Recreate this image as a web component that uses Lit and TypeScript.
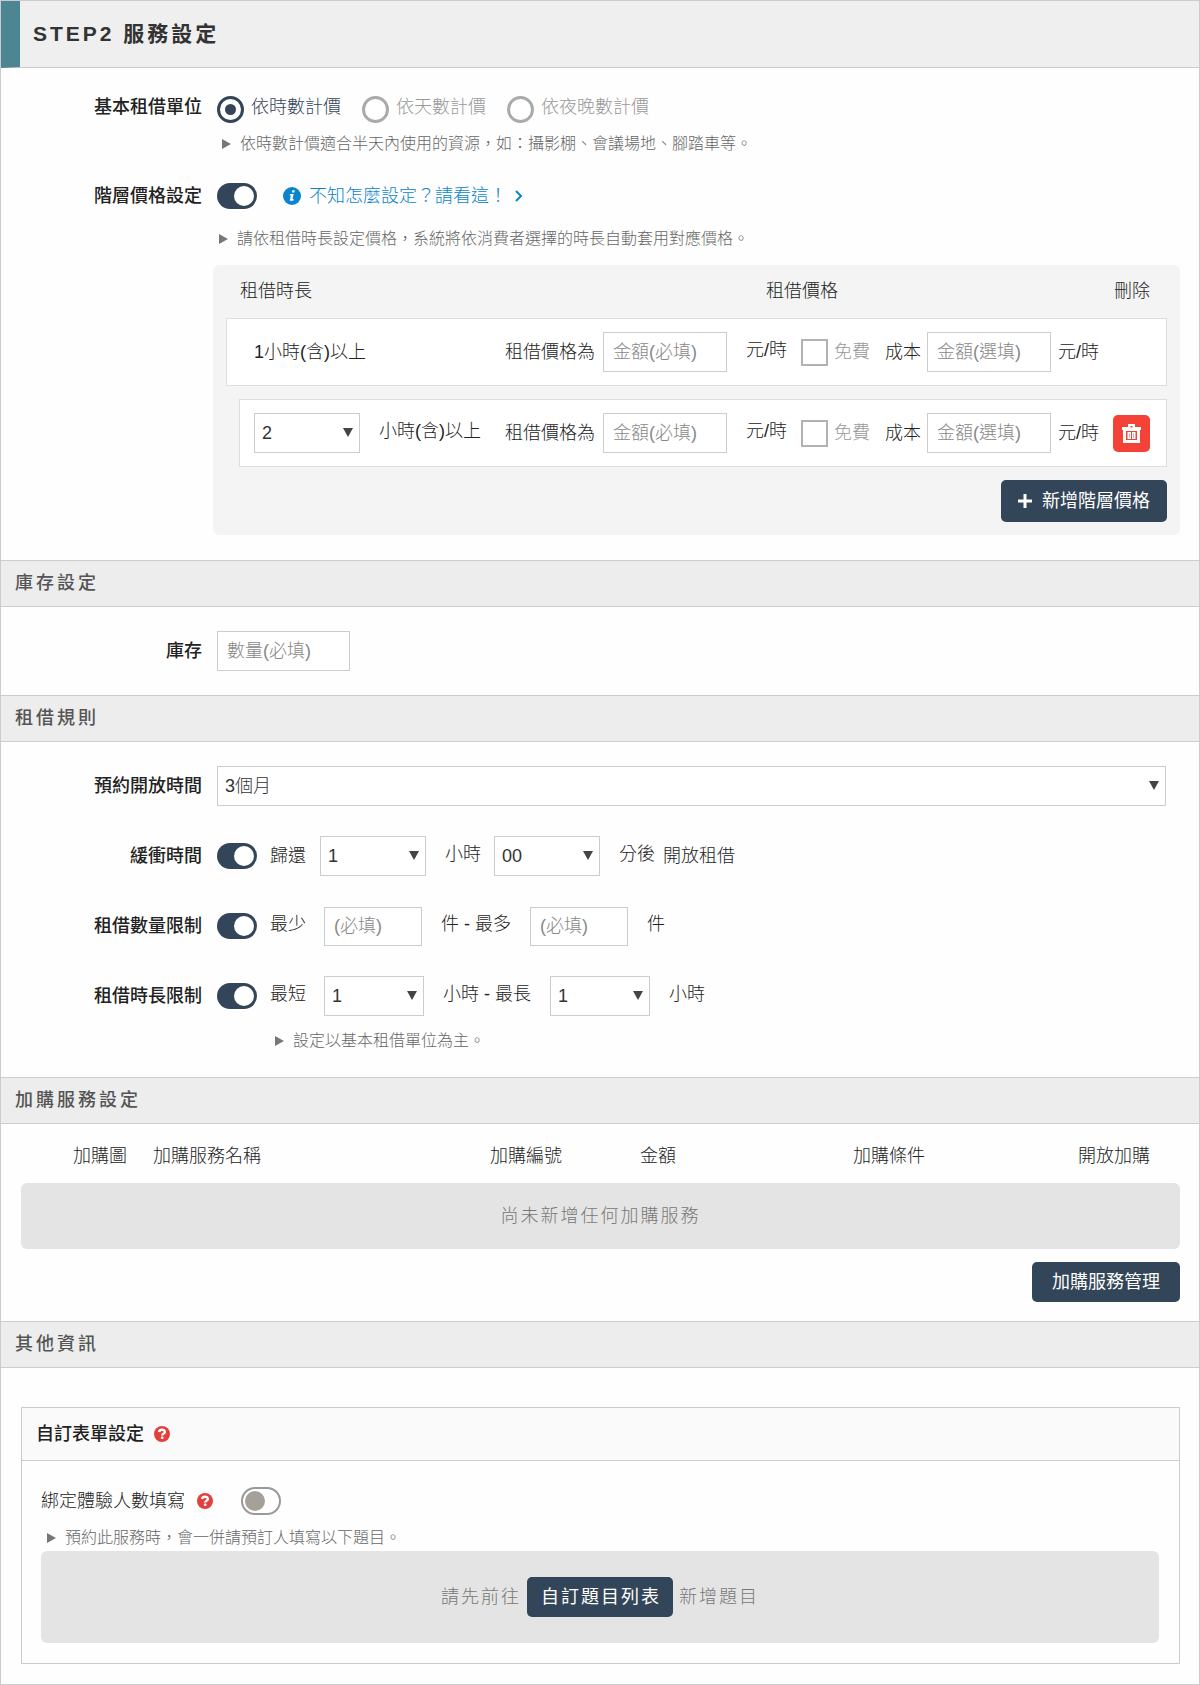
import { LitElement, html, css, svg, nothing } from "lit";
import { customElement, property } from "lit/decorators.js";

const shared = css`
  *, *::before, *::after { box-sizing: border-box; }
  input, select, button {
    font: inherit;
    color: inherit;
    margin: 0;
    border-radius: 0;
  }
  .text-box {
    height: 40px;
    width: 124px;
    padding: 0 9px;
    border: 1px solid #ccc;
    background: #fff;
    color: #444;
  }
  .text-box::placeholder { color: #888; opacity: 1; }
  .btn {
    display: inline-flex;
    align-items: center;
    justify-content: center;
    height: 40px;
    border: 0;
    border-radius: 5px;
    background: #334558;
    color: #fff;
    font-weight: 400;
    text-decoration: none;
    cursor: pointer;
  }
  .unit { padding-bottom: 4px; white-space: nowrap; }
`;

/* Drop-down with a solid triangle marker */
@customElement("ui-select")
export class UiSelect extends LitElement {
  @property({ type: Array }) options: string[] = [];
  @property() label = "";

  static styles = [shared, css`
    :host { display: block; position: relative; }
    select {
      display: block;
      width: 100%;
      height: 40px;
      padding: 0 24px 0 7px;
      border: 1px solid #ccc;
      background: #fff;
      color: #333;
      appearance: none;
    }
    .arrow {
      position: absolute;
      right: 7px;
      top: 15px;
      border: 5px solid transparent;
      border-top: 9px solid #444;
      border-bottom: 0;
      pointer-events: none;
    }
  `];

  render() {
    return html`
      <select aria-label=${this.label}>
        ${this.options.map((o) => html`<option>${o}</option>`)}
      </select>
      <span class="arrow"></span>`;
  }
}

/* On/off switch */
@customElement("ui-switch")
export class UiSwitch extends LitElement {
  @property({ type: Boolean }) checked = false;
  @property() label = "";

  static styles = [shared, css`
    :host { display: block; flex: none; }
    input {
      display: flex;
      align-items: center;
      width: 40px;
      height: 28px;
      padding: 0 2px;
      border: 2px solid #999;
      border-radius: 14px;
      background: #fff;
      appearance: none;
      cursor: pointer;
    }
    input::before {
      content: "";
      width: 20px;
      height: 20px;
      border-radius: 50%;
      background: #a5a19a;
    }
    input:checked {
      justify-content: flex-end;
      height: 26px;
      padding: 0 3px;
      border: 0;
      border-radius: 13px;
      background: #334558;
    }
    input:checked::before { background: #fff; }
  `];

  render() {
    return html`<input type="checkbox" role="switch" aria-label=${this.label} .checked=${this.checked}>`;
  }
}

/* One tier of the price list */
@customElement("price-tier")
export class PriceTier extends LitElement {
  @property({ type: Boolean }) removable = false;

  static styles = [shared, css`
    :host {
      display: grid;
      grid-template-columns: 1fr auto 37px;
      column-gap: 14px;
      align-items: center;
      height: 68px;
      padding: 0 16px 0 27px;
      border: 1px solid #ddd;
      background: #fff;
    }
    :host([removable]) { margin-left: 13px; padding-left: 14px; }
    .duration { display: flex; align-items: center; gap: 19px; }
    .duration ui-select { width: 106px; }
    .price { display: flex; align-items: center; white-space: nowrap; }
    .amount { margin: 0 19px 0 8px; }
    .free { display: flex; align-items: center; gap: 6px; margin: 0 15px 0 14px; color: #999; }
    .free input {
      width: 27px;
      height: 27px;
      border: 2px solid #b5b1ae;
      background: #fff;
      appearance: none;
    }
    .cost { margin: 0 7px 0 6px; }
    .remove { width: 37px; height: 37px; padding: 0; background: #f44336; }
  `];

  render() {
    return html`
      <div class="duration">
        ${this.removable
          ? html`<ui-select label="時數" .options=${["2", "3", "4"]}></ui-select><span class="unit">小時(含)以上</span>`
          : html`<span>1小時(含)以上</span>`}
      </div>
      <div class="price">
        <label for="amount">租借價格為</label>
        <input class="text-box amount" id="amount" placeholder="金額(必填)">
        <span class="unit">元/時</span>
        <label class="free"><input type="checkbox">免費</label>
        <label for="cost">成本</label>
        <input class="text-box cost" id="cost" placeholder="金額(選填)">
        <span>元/時</span>
      </div>
      ${this.removable
        ? html`<button class="btn remove" aria-label="刪除">
            <svg width="19" height="19" viewBox="0 0 19 19" fill="#fff" fill-rule="evenodd">
              <path d="M6 0h7v3h6v3h-1v13H1V6H0V3h6zM8.500 2v1.500h2V2zM4 7v9h11V7zM5.500 8h3.500v7H5.500zM10 8h3.500v7H10zM7 9.500v4h.5v-4zM11.500 9.500v4h.5v-4z"/>
            </svg>
          </button>`
        : nothing}`;
  }
}

const helpIcon = html`
  <svg class="help" width="16" height="16" viewBox="0 0 16 16" role="img" aria-label="說明">
    ${svg`<circle cx="8" cy="8" r="8" fill="#e3403c"/>
    <path d="M5 6C5.300 4.500 6.400 3.700 8 3.700s2.900.8 2.900 2.200c0 1.800-2.700 1.700-2.700 3.500" fill="none" stroke="#fff" stroke-width="2.400"/>
    <rect x="6.900" y="10.500" width="2.600" height="2.500" rx="1" fill="#fff"/>`}
  </svg>`;

@customElement("app-root")
export class AppRoot extends LitElement {
  static styles = [shared, css`
    :host {
      display: block;
      border: 1px solid #ccc;
      background: #fefefe;
      color: #222;
      font: 300 18px/24px "Liberation Sans", "Noto Sans CJK TC", sans-serif;
    }
    h1, h2, h3 { margin: 0; }
    .title {
      display: flex;
      align-items: center;
      height: 67px;
      padding-left: 13px;
      border-left: 19px solid #4d8693;
      border-bottom: 1px solid #ccc;
      background: #eeefee;
      color: #333;
      font-size: 21px;
      font-weight: 600;
      letter-spacing: 3px;
    }
    .section {
      height: 47px;
      padding: 0 14px;
      border: solid #ccc;
      border-width: 1px 0;
      background: #ededed;
      color: #555;
      font-size: 18px;
      line-height: 45px;
      font-weight: 500;
      letter-spacing: 3px;
    }
    .form { padding: 24px 0; }
    .basic { padding-top: 27px; }
    .row {
      display: grid;
      grid-template-columns: 201px 1fr;
      column-gap: 15px;
      align-items: center;
    }
    .row + .row { margin-top: 30px; }
    .name { text-align: right; color: #222; font-weight: 500; }
    .fields { display: flex; align-items: center; min-height: 40px; }
    .compact { min-height: 27px; }
    .wide { padding-right: 33px; }
    .wide ui-select { flex: 1; }

    .radio { display: flex; align-items: center; gap: 7px; height: 27px; margin-right: 21px; color: #999; }
    .radio input {
      display: grid;
      place-items: center;
      width: 27px;
      height: 27px;
      border: 3px solid #aaa;
      border-radius: 50%;
      background: #fff;
      appearance: none;
    }
    .radio input:checked { border-color: #334558; }
    .radio input:checked::before {
      content: "";
      width: 11px;
      height: 11px;
      border-radius: 50%;
      background: #334558;
    }
    .radio.on { color: #334558; }

    .hint {
      display: flex;
      align-items: center;
      gap: 9px;
      margin: 0;
      color: #666;
      font-size: 16px;
    }
    .hint::before {
      content: "";
      border: 5px solid transparent;
      border-left: 9px solid #777;
      border-right: 0;
    }
    .hint-unit { margin: 9px 0 26px 221px; }
    .hint-tier { margin: 18px 0 14px 218px; }
    .hint-limit { margin: 13px 0 0 274px; }

    .guide {
      display: flex;
      align-items: center;
      gap: 8px;
      margin-left: 26px;
      color: #0a84cc;
      text-decoration: none;
    }
    .tiers {
      display: grid;
      gap: 13px;
      margin: 0 19px 1px 212px;
      padding: 0 13px 13px;
      border-radius: 6px;
      background: #f4f4f4;
    }
    .tiers-head {
      display: grid;
      grid-template-columns: 1fr 594px 51px;
      align-items: center;
      height: 52px;
      margin-bottom: -12px;
      padding: 0 17px 0 14px;
    }
    .center { text-align: center; }
    .right { text-align: right; }
    .add { justify-self: end; gap: 10px; width: 166px; height: 42px; padding: 0; }

    .stock { width: 133px; }
    .lead { margin: 0 14px 0 13px; }
    .limit .lead { margin-right: 18px; }
    .short { width: 106px; }
    .mid { width: 100px; }
    .count { width: 98px; height: 39px; }
    .between { margin: 0 13px 0 19px; }
    .limit .between { margin: 0 19px; }
    .after { margin: 0 8px 0 19px; }

    .addons { padding: 0 19px 19px 20px; }
    table { width: 100%; border-spacing: 0; table-layout: fixed; }
    th { height: 59px; padding: 5px 0 0; font-weight: 300; }
    .c-img { width: 119px; padding-right: 13px; text-align: right; }
    .c-name { padding-left: 13px; text-align: left; }
    .c-num { width: 132px; }
    .c-cond { width: 330px; }
    .c-open { width: 126px; padding-right: 30px; text-align: right; }
    .empty {
      border-radius: 6px;
      background: #e4e4e4;
      color: #777;
      letter-spacing: 2px;
      text-align: center;
    }
    td.empty { height: 66px; padding: 0; }
    .actions { display: flex; justify-content: flex-end; margin-top: 13px; }
    .manage { width: 148px; }

    .other { padding: 39px 19px 20px 20px; }
    .card { border: 1px solid #ccc; }
    .card-head {
      display: flex;
      align-items: center;
      gap: 10px;
      height: 53px;
      padding: 0 14px;
      border-bottom: 1px solid #ccc;
      background: #fafafa;
      color: #222;
      font-size: 18px;
      font-weight: 500;
    }
    .card-body { padding: 26px 20px 20px 19px; }
    .bind { display: flex; align-items: center; }
    .bind .help { margin: 0 28px 0 12px; }
    .card-body .hint { margin: 11px 0 1px 6px; }
    .questions { display: flex; align-items: center; justify-content: center; gap: 6px; height: 92px; }
    .questions .btn { padding: 0 12px 0 14px; }
  `];

  render() {
    return html`
      <h1 class="title">STEP2 服務設定</h1>
      <div class="form basic">
        <div class="row">
          <span class="name unit">基本租借單位</span>
          <div class="fields compact" role="radiogroup" aria-label="基本租借單位">
            <label class="radio on"><input type="radio" name="unit" checked><span class="unit">依時數計價</span></label>
            <label class="radio"><input type="radio" name="unit"><span class="unit">依天數計價</span></label>
            <label class="radio"><input type="radio" name="unit"><span class="unit">依夜晚數計價</span></label>
          </div>
        </div>
        <p class="hint hint-unit">依時數計價適合半天內使用的資源，如：攝影棚、會議場地、腳踏車等。</p>
        <div class="row">
          <span class="name">階層價格設定</span>
          <div class="fields compact">
            <ui-switch checked label="階層價格設定"></ui-switch>
            <a class="guide" href="#guide">
              <svg width="18" height="18" viewBox="0 0 18 18" aria-hidden="true">
                <circle cx="9" cy="9" r="9" fill="#0a84cc"/>
                <path d="M9.400 3.200h2.400l-.5 2.300H8.900zM7 7h3.700l-1.200 5h1.200l-.3 1.700H6.700L7.900 8.600H6.700z" fill="#fff"/>
              </svg>
              <span>不知怎麼設定？請看這！</span>
              <svg width="8" height="12" viewBox="0 0 8 12" fill="none" stroke="#0a84cc" stroke-width="2" aria-hidden="true">
                <path d="M1 1l5 5-5 5"/>
              </svg>
            </a>
          </div>
        </div>
        <p class="hint hint-tier">請依租借時長設定價格，系統將依消費者選擇的時長自動套用對應價格。</p>
        <div class="tiers">
          <div class="tiers-head">
            <span>租借時長</span><span class="center">租借價格</span><span class="right">刪除</span>
          </div>
          <price-tier></price-tier>
          <price-tier removable></price-tier>
          <button class="btn add">
            <svg width="14" height="14" viewBox="0 0 14 14" stroke="#fff" stroke-width="3" aria-hidden="true">
              <path d="M7 0v14M0 7h14"/>
            </svg>
            新增階層價格
          </button>
        </div>
      </div>

      <h2 class="section">庫存設定</h2>
      <div class="form">
        <div class="row">
          <label class="name" for="stock">庫存</label>
          <div class="fields"><input class="text-box stock" id="stock" placeholder="數量(必填)"></div>
        </div>
      </div>

      <h2 class="section">租借規則</h2>
      <div class="form">
        <div class="row">
          <span class="name">預約開放時間</span>
          <div class="fields wide"><ui-select label="預約開放時間" .options=${["3個月", "6個月"]}></ui-select></div>
        </div>
        <div class="row">
          <span class="name">緩衝時間</span>
          <div class="fields">
            <ui-switch checked label="緩衝時間"></ui-switch>
            <span class="lead">歸還</span>
            <ui-select class="short" label="緩衝小時" .options=${["1", "2", "3"]}></ui-select>
            <span class="unit between">小時</span>
            <ui-select class="short" label="緩衝分鐘" .options=${["00", "30"]}></ui-select>
            <span class="unit after">分後</span>
            <span>開放租借</span>
          </div>
        </div>
        <div class="row limit">
          <span class="name">租借數量限制</span>
          <div class="fields">
            <ui-switch checked label="租借數量限制"></ui-switch>
            <span class="unit lead">最少</span>
            <input class="text-box count" aria-label="最少件數" placeholder="(必填)">
            <span class="unit between">件 - 最多</span>
            <input class="text-box count" aria-label="最多件數" placeholder="(必填)">
            <span class="unit between">件</span>
          </div>
        </div>
        <div class="row limit">
          <span class="name">租借時長限制</span>
          <div class="fields">
            <ui-switch checked label="租借時長限制"></ui-switch>
            <span class="unit lead">最短</span>
            <ui-select class="mid" label="最短小時" .options=${["1", "2", "3"]}></ui-select>
            <span class="unit between">小時 - 最長</span>
            <ui-select class="mid" label="最長小時" .options=${["1", "2", "3"]}></ui-select>
            <span class="unit between">小時</span>
          </div>
        </div>
        <p class="hint hint-limit">設定以基本租借單位為主。</p>
      </div>

      <h2 class="section">加購服務設定</h2>
      <div class="addons">
        <table>
          <thead>
            <tr>
              <th class="c-img">加購圖</th>
              <th class="c-name">加購服務名稱</th>
              <th class="c-num">加購編號</th>
              <th class="c-num">金額</th>
              <th class="c-cond">加購條件</th>
              <th class="c-open">開放加購</th>
            </tr>
          </thead>
          <tbody>
            <tr><td class="empty" colspan="6">尚未新增任何加購服務</td></tr>
          </tbody>
        </table>
        <div class="actions"><button class="btn manage">加購服務管理</button></div>
      </div>

      <h2 class="section">其他資訊</h2>
      <div class="other">
        <div class="card">
          <h3 class="card-head">自訂表單設定${helpIcon}</h3>
          <div class="card-body">
            <div class="bind">
              <span>綁定體驗人數填寫</span>${helpIcon}
              <ui-switch label="綁定體驗人數填寫"></ui-switch>
            </div>
            <p class="hint">預約此服務時，會一併請預訂人填寫以下題目。</p>
            <div class="empty questions">
              <span>請先前往</span>
              <a class="btn" href="#questions">自訂題目列表</a>
              <span>新增題目</span>
            </div>
          </div>
        </div>
      </div>`;
  }
}
